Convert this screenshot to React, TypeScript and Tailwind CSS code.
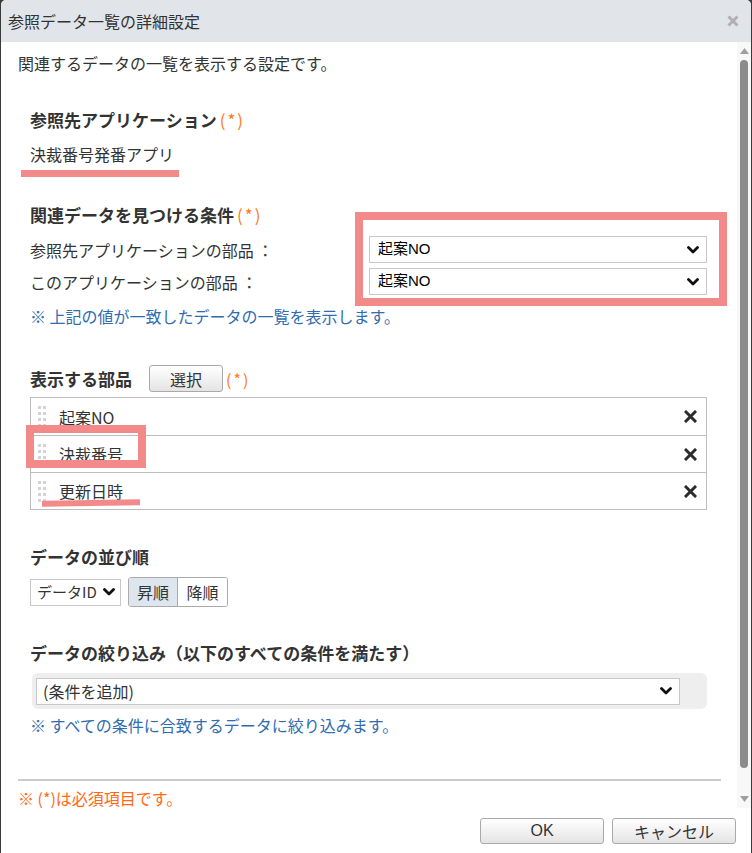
import React from 'react';

const jp = { fontFamily: '"Noto Sans CJK JP", "Liberation Sans", sans-serif' };
const latin = { fontFamily: '"Liberation Sans", "Noto Sans CJK JP", sans-serif' };

function Chevron() {
  return (
    <svg width="12" height="8" viewBox="0 0 12 8" className="shrink-0">
      <path d="M1.5 1.5 L6 6 L10.5 1.5" fill="none" stroke="#111" strokeWidth="2.8" strokeLinecap="round" strokeLinejoin="round" />
    </svg>
  );
}

function Required() {
  return <span className="font-normal text-[#ff7a1a] ml-[3px] tracking-[2px]">(*)</span>;
}

function FakeSelect({ value, className }: { value: string; className: string }) {
  return (
    <div className={`flex items-center justify-between border border-[#c8c8c8] bg-white pl-[8px] pr-[7px] text-[15px] text-black ${className}`} style={latin}>
      <span>{value}</span>
      <Chevron />
    </div>
  );
}

function DragHandle() {
  return (
    <div className="grid grid-cols-2 gap-x-[2px] gap-y-[3px] w-[8px]">
      {Array.from({ length: 8 }).map((_, i) => (
        <span key={i} className="block w-[3px] h-[3px] bg-[#d4d4d4]" />
      ))}
    </div>
  );
}

function RemoveIcon() {
  return (
    <svg width="13" height="13" viewBox="0 0 13 13">
      <path d="M2 2 L11 11 M11 2 L2 11" stroke="#2b2b2b" strokeWidth="3" strokeLinecap="square" />
    </svg>
  );
}

const fields = ['起案NO', '決裁番号', '更新日時'];

export default function App() {
  return (
    <div className="w-[752px] h-[853px] bg-[#3a3a3a] px-px text-[#333]" style={jp}>
      <div className="relative h-full flex flex-col bg-white rounded-t-[5px] overflow-hidden">
        {/* header */}
        <div className="h-[42px] shrink-0 bg-[#e1e5ea] flex items-center justify-between pl-[7px] pr-[12px]">
          <span className="text-[16px] text-[#333]">参照データ一覧の詳細設定</span>
          <svg width="12" height="12" viewBox="0 0 12 12">
            <path d="M1.5 1.5 L10.5 10.5 M10.5 1.5 L1.5 10.5" stroke="#b0b0b0" strokeWidth="3" />
          </svg>
        </div>

        {/* scroll area */}
        <div className="h-[766px] shrink-0 flex">
          <div className="flex-1 overflow-hidden pl-[17px] pr-[16px] pt-[11px]">
            <p className="text-[16px] leading-[20px]">関連するデータの一覧を表示する設定です。</p>

            <div className="pl-[12px] pr-[14px]">
              <h3 className="mt-[36px] text-[17px] leading-[22px] font-bold">
                参照先アプリケーション<Required />
              </h3>
              <p className="mt-[13px] text-[16px] leading-[20px]">決裁番号発番アプリ</p>

              <h3 className="mt-[40px] text-[17px] leading-[22px] font-bold">
                関連データを見つける条件<Required />
              </h3>
              <div className="mt-[10px] flex flex-col gap-[5px]">
                <div className="flex items-center justify-between">
                  <span className="text-[16px]">参照先アプリケーションの部品 ：</span>
                  <FakeSelect value="起案NO" className="w-[338px] h-[27px]" />
                </div>
                <div className="flex items-center justify-between">
                  <span className="text-[16px]">このアプリケーションの部品 ：</span>
                  <FakeSelect value="起案NO" className="w-[338px] h-[27px]" />
                </div>
              </div>
              <p className="mt-[11px] text-[16px] leading-[20px] text-[#2f6cb0]">※ 上記の値が一致したデータの一覧を表示します。</p>

              <div className="mt-[39px] h-[27px] flex items-center">
                <h3 className="text-[17px] font-bold w-[119px]">表示する部品</h3>
                <button className="w-[74px] h-[27px] border border-[#a9a9a9] rounded-[3px] bg-gradient-to-b from-white to-[#e4e4e4] text-[16px] text-[#333]">
                  選択
                </button>
                <Required />
              </div>
              <div className="mt-[5px] border border-[#bdbdbd]">
                {fields.map((f, i) => (
                  <div key={f} className={`h-[37px] flex items-center pl-[7px] pr-[9px] ${i > 0 ? 'border-t border-[#bdbdbd]' : ''}`}>
                    <DragHandle />
                    <span className="ml-[13px] flex-1 text-[16px]">{f}</span>
                    <RemoveIcon />
                  </div>
                ))}
              </div>

              <h3 className="mt-[36px] text-[17px] leading-[22px] font-bold">データの並び順</h3>
              <div className="mt-[9px] h-[30px] flex items-center gap-[7px]">
                <div className="w-[91px] h-[27px] flex items-center justify-between border border-[#c8c8c8] pl-[6px] pr-[5px] text-[15px]">
                  <span>データID</span>
                  <Chevron />
                </div>
                <div className="h-[30px] flex border border-[#aaa] rounded-[3px] overflow-hidden text-[16px]">
                  <span className="w-[49px] flex items-center justify-center bg-[#dde6ee] border-r border-[#aaa]">昇順</span>
                  <span className="w-[49px] flex items-center justify-center bg-white">降順</span>
                </div>
              </div>

              <h3 className="mt-[35px] text-[17px] leading-[22px] font-bold">データの絞り込み（以下のすべての条件を満たす）</h3>
              <div className="mt-[9px] ml-[2px] h-[36px] bg-[#eeeeee] rounded-[6px] flex items-center pl-[4px] pr-[27px]">
                <div className="flex-1 h-[27px] flex items-center justify-between border border-[#c8c8c8] bg-white pl-[6px] pr-[7px] text-[16px]">
                  <span>(条件を追加)</span>
                  <Chevron />
                </div>
              </div>
              <p className="mt-[6px] text-[16px] leading-[20px] text-[#2f6cb0]">※ すべての条件に合致するデータに絞り込みます。</p>
            </div>

            <hr className="mt-[44px] border-0 h-[2px] bg-[#cccccc]" />
            <p className="mt-[7px] text-[16px] leading-[20px] text-[#ff6a13]">※ (*)は必須項目です。</p>
          </div>

          {/* scrollbar */}
          <div className="w-[14px] shrink-0 bg-[#f8f8f8] flex flex-col items-center">
            <svg width="9" height="6" viewBox="0 0 9 6" className="mt-[6px]">
              <path d="M4.5 0 L9 6 L0 6 Z" fill="#a0a0a0" />
            </svg>
            <div className="mt-[6px] w-[8px] h-[708px] rounded-full bg-[#8c8c8c]" />
            <div className="flex-1" />
            <svg width="9" height="6" viewBox="0 0 9 6" className="mb-[6px]">
              <path d="M0 0 L9 0 L4.5 6 Z" fill="#a0a0a0" />
            </svg>
          </div>
        </div>

        {/* footer */}
        <div className="flex-1 flex justify-end items-start gap-[8px] pt-[10px] pr-[15px]">
          <button className="w-[124px] h-[26px] border border-[#a9a9a9] rounded-[3px] bg-gradient-to-b from-white to-[#e4e4e4] text-[16px] text-[#333]" style={latin}>
            OK
          </button>
          <button className="w-[124px] h-[26px] border border-[#a9a9a9] rounded-[3px] bg-gradient-to-b from-white to-[#e4e4e4] text-[16px] text-[#333]">
            キャンセル
          </button>
        </div>

        {/* annotation marks */}
        <div className="absolute left-[354px] top-[212px] w-[372px] h-[94px] border-[8px] border-[#f38a8a] pointer-events-none" />
        <div className="absolute left-[25px] top-[425px] w-[120px] h-[43px] border-[8px] border-[#f38a8a] pointer-events-none" />
        <div className="absolute left-[20px] top-[170px] w-[158px] h-[7px] bg-[#f38a8a] pointer-events-none" />
        <div className="absolute left-[41px] top-[500px] w-[98px] h-[6px] bg-[#f38a8a] -rotate-[1deg] pointer-events-none" />
      </div>
    </div>
  );
}
